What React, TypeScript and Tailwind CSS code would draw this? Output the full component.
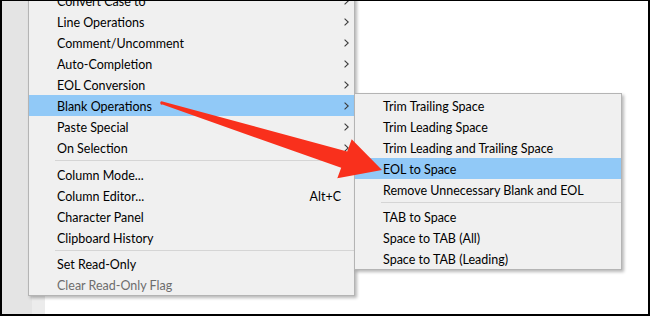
import React from "react";

type Item = { label: string; sub?: boolean; shortcut?: string; active?: boolean; disabled?: boolean } | "sep";

const mainItems: Item[] = [
  { label: "Convert Case to", sub: true },
  { label: "Line Operations", sub: true },
  { label: "Comment/Uncomment", sub: true },
  { label: "Auto-Completion", sub: true },
  { label: "EOL Conversion", sub: true },
  { label: "Blank Operations", sub: true, active: true },
  { label: "Paste Special", sub: true },
  { label: "On Selection", sub: true },
  "sep",
  { label: "Column Mode..." },
  { label: "Column Editor...", shortcut: "Alt+C" },
  { label: "Character Panel" },
  { label: "Clipboard History" },
  "sep",
  { label: "Set Read-Only" },
  { label: "Clear Read-Only Flag", disabled: true },
];

const blankItems: Item[] = [
  { label: "Trim Trailing Space" },
  { label: "Trim Leading Space" },
  { label: "Trim Leading and Trailing Space" },
  { label: "EOL to Space", active: true },
  { label: "Remove Unnecessary Blank and EOL" },
  "sep",
  { label: "TAB to Space" },
  { label: "Space to TAB (All)" },
  { label: "Space to TAB (Leading)" },
];

function Chevron() {
  return (
    <svg width="5" height="8" viewBox="0 0 5 8" className="shrink-0">
      <path d="M0.6 0.6 L4.2 4 L0.6 7.4" fill="none" stroke="#3c3c3c" strokeWidth="1.1" />
    </svg>
  );
}

function MenuRows({ items, seps }: { items: Item[]; seps: string[] }) {
  let s = 0;
  return (
    <>
      {items.map((it, i) => {
        if (it === "sep") {
          const h = seps[s++];
          return (
            <div key={i} className={h}>
              <div className="ml-[26px] mt-[2px] h-px bg-[#d5d5d5]" />
            </div>
          );
        }
        return (
          <div
            key={i}
            className={`flex h-[21px] items-center justify-between pl-[28px] pr-[5px] ${
              it.active ? "bg-[#91c9f7]" : ""
            } ${it.disabled ? "text-[#6d6d6d]" : "text-black"}`}
          >
            <span className="pt-[4px]">{it.label}</span>
            {it.sub && <Chevron />}
            {it.shortcut && <span className="mr-[8px] pt-[4px]">{it.shortcut}</span>}
          </div>
        );
      })}
    </>
  );
}

export default function App() {
  return (
    <div
      className="relative h-[316px] w-[650px] overflow-hidden border-x-2 border-t border-b-2 border-black bg-white text-[12.5px] leading-none"
      style={{ fontFamily: "Lato, 'Liberation Sans', sans-serif" }}
    >
      {/* editor behind the menus */}
      <div className="flex h-full">
        <div className="w-[30px] bg-[#e4e4e4]" />
        <div className="w-[13px] bg-[#ececec]" />
        <div className="flex-1 bg-white" />
      </div>

      {/* main context menu */}
      <div className="absolute left-[26px] top-[-13px] flex w-[327px] flex-col border border-[#b4b4b4] bg-[#f0f0f0] pt-px shadow-[2px_2px_3px_rgba(0,0,0,0.28)]">
        <MenuRows items={mainItems} seps={["h-[6px]", "h-[5px]"]} />
      </div>

      {/* Blank Operations submenu */}
      <div className="absolute left-[352px] top-[92px] flex w-[268px] flex-col border border-[#b4b4b4] bg-[#f0f0f0] pt-px shadow-[2px_2px_3px_rgba(0,0,0,0.28)]">
        <MenuRows items={blankItems} seps={["h-[6px]"]} />
      </div>

      {/* red pointer arrow */}
      <svg className="pointer-events-none absolute left-0 top-0" width="646" height="313" viewBox="2 1 646 313">
        <path
          d="M161.5 101.3 L347.2 151.4 L351.7 139.3 L382 170 L337.3 178.3 L341.2 167.8 L162.5 104.6 A1.7 1.7 0 0 1 161.5 101.3 Z"
          fill="#f9301c"
        />
      </svg>
    </div>
  );
}
